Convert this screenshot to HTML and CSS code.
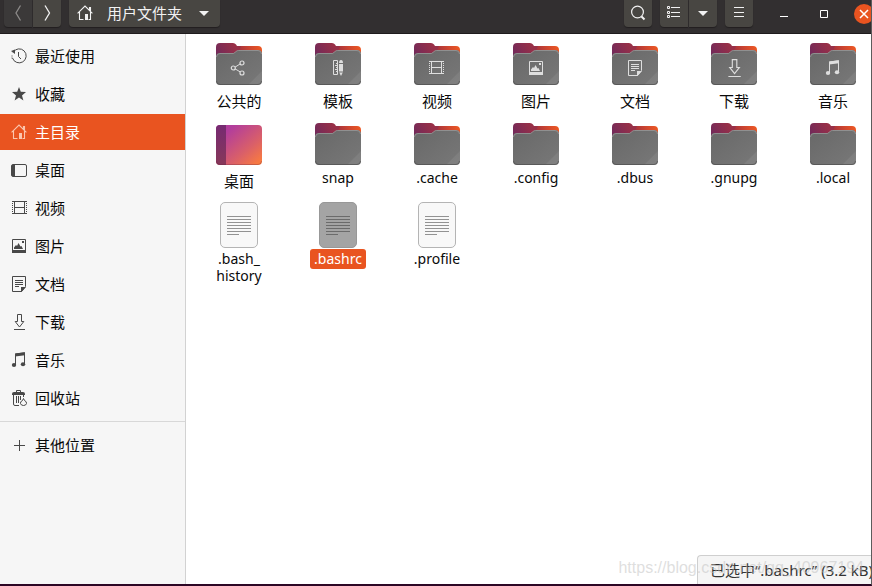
FILE: index.html
```html
<!DOCTYPE html>
<html lang="zh-CN">
<head>
<meta charset="utf-8">
<meta name="viewport" content="width=device-width, initial-scale=1">
<title>主目录</title>
<link rel="stylesheet" href="styles.css">
</head>
<body>
<svg class="sprite" aria-hidden="true">
  <defs>
    <linearGradient id="back" gradientUnits="userSpaceOnUse" x1="1" y1="22" x2="47" y2="6">
      <stop offset="0" stop-color="#772953"/><stop offset="0.5" stop-color="#a0303f"/><stop offset="0.75" stop-color="#cd4530"/><stop offset="1" stop-color="#f05a22"/>
    </linearGradient>
    <linearGradient id="tab" gradientUnits="userSpaceOnUse" x1="1" y1="14" x2="18" y2="4">
      <stop offset="0" stop-color="#70295a"/><stop offset="1" stop-color="#983048"/>
    </linearGradient>
    <linearGradient id="front" x1="0" y1="0" x2="1" y2="1">
      <stop offset="0" stop-color="#686868"/><stop offset="1" stop-color="#787878"/>
    </linearGradient>
    <linearGradient id="desk" x1="0" y1="0" x2="1" y2="1">
      <stop offset="0.2" stop-color="#b23d9c"/><stop offset="0.65" stop-color="#da6068"/><stop offset="1" stop-color="#ff8038"/>
    </linearGradient>
    <linearGradient id="dock" x1="0" y1="0" x2="0" y2="1">
      <stop offset="0" stop-color="#762a72"/><stop offset="1" stop-color="#873859"/>
    </linearGradient>
  </defs>
  <symbol id="folder" viewBox="0 0 48 48">
    <path fill="url(#back)" d="M1 10h22l1-4h19a4 4 0 0 1 4 4v12H1z"/>
    <path fill="url(#tab)" d="M1 24V7a4 4 0 0 1 4-4h13q2 0 3 1.500l1 1.500h4l-3 7z"/>
    <path fill="url(#front)" d="M1 17a4 4 0 0 1 4-4h13q1.500 0 2.500-1l1.500-1.200q.8-.8 2-.8h19a4 4 0 0 1 4 4v27a4 4 0 0 1-4 4H5a4 4 0 0 1-4-4z"/>
    <path fill="#fff" opacity=".07" d="M47 31v10a4 4 0 0 1-4 4H33z"/>
    <path fill="none" stroke="#999" opacity=".8" d="M1.500 17a3.500 3.500 0 0 1 3.500-3.500h13.500l3.500-2.700q.6-.3 1.500-.3H43a3.500 3.500 0 0 1 3.500 3.500"/>
    <path fill="none" stroke="#4e4e4e" opacity=".7" d="M1.500 41a3.500 3.500 0 0 0 3.500 3.500h38a3.500 3.500 0 0 0 3.500-3.500"/>
  </symbol>
  <symbol id="desktop-big" viewBox="0 0 48 48">
    <rect x="1" y="5" width="46" height="40" rx="4" fill="url(#desk)"/>
    <path d="M11 5v40H5a4 4 0 0 1-4-4V9a4 4 0 0 1 4-4z" fill="url(#dock)"/>
    <path d="M1.500 41a3.500 3.500 0 0 0 3.500 3.500h38a3.500 3.500 0 0 0 3.500-3.500" fill="none" stroke="#602040" opacity=".3"/>
  </symbol>
  <symbol id="text-file" viewBox="0 0 48 49">
    <rect class="paper" x="5.500" y="2.500" width="37" height="45" rx="4.500"/>
    <path class="ink" fill="none" d="M12 16.500h24M12 19.500h24M12 22.500h24M12 25.500h24M12 28.500h24M12 31.500h24M12 34.500h12"/>
  </symbol>
  <symbol id="home" viewBox="0 0 16 16">
    <path fill="none" stroke="currentColor" stroke-width="1.100" d="M.6 8.400 8 1.100l7.400 7.300M2.500 7v7.500h4M13.500 7v7.500h-2M12.500 5V2.500h1V6"/>
    <path fill="currentColor" d="M8 9h3v6H8z"/>
  </symbol>
  <symbol id="recent" viewBox="0 0 16 16">
    <path fill="none" stroke="currentColor" d="M2.200 4.200A7 7 0 1 1 1.500 10M7.500 4v4.500L10 11"/>
    <path fill="currentColor" d="M0 3l4-1.500V6z"/>
    <path fill="none" stroke="currentColor" stroke-dasharray="1 1" d="M1 7.500v3"/>
  </symbol>
  <symbol id="star" viewBox="0 0 16 16">
    <path fill="currentColor" d="m8 1 1.800 4.800 5.200.3-4 3.300 1.400 5L8 11.600l-4.400 2.800 1.400-5-4-3.300 5.200-.3z"/>
  </symbol>
  <symbol id="desktop" viewBox="0 0 16 16">
    <rect x=".5" y="2.500" width="15" height="12" rx="1.500" fill="none" stroke="currentColor"/>
    <path fill="currentColor" d="M1 3h3v11H1z"/>
  </symbol>
  <symbol id="video" viewBox="0 0 16 16">
    <path fill="none" stroke="currentColor" d="M1 1.500h15M1 13.500h15M3.500 1v13M13.500 1v13M3 7.500h11"/>
    <path fill="none" stroke="currentColor" stroke-dasharray="1 1" d="M1.500 1v13M15.500 1v13"/>
  </symbol>
  <symbol id="image" viewBox="0 0 16 16">
    <path fill="none" stroke="currentColor" d="M1.500 1.500h13v12h-13z"/>
    <path fill="currentColor" d="M1 12h14v3H1zM3 11V9.500L5 7l1 1 1.500-3 2 3.500L10.500 8l1.500 3zM11 3h2v2h-2z"/>
  </symbol>
  <symbol id="doc" viewBox="0 0 16 16">
    <path fill="none" stroke="currentColor" d="M1.500.5h13v10l-4 5h-9zM4 4.500h8M4 6.500h8M4 8.500h8M4 10.500h4"/>
    <path fill="currentColor" d="M10 11h5l-4.500 5H10z"/>
  </symbol>
  <symbol id="down" viewBox="0 0 16 16">
    <path fill="none" stroke="currentColor" d="M6.500.5h4v7h2.300L8.500 13 4.200 7.500h2.300zM3 15.500h11"/>
  </symbol>
  <symbol id="music" viewBox="0 0 16 16">
    <path fill="none" stroke="currentColor" d="M4.500 13V2L13.500.8v11.500"/>
    <path fill="currentColor" d="M4 1.500 14 .3v3L4 4.500z"/>
    <ellipse cx="3" cy="13" rx="2.200" ry="2" fill="currentColor"/><ellipse cx="12" cy="12.300" rx="2.200" ry="2" fill="currentColor"/>
  </symbol>
  <symbol id="trash" viewBox="0 0 16 16">
    <path fill="none" stroke="currentColor" d="M5.500 2V.5h4V2M2.500 4v10q0 1.500 1.500 1.500h4M12.500 4v3M5.500 6v7M7.500 6v7M9.500 6v4"/>
    <path fill="currentColor" d="M1 4q0-2 2-2h9q2 0 2 2v1H1z"/>
    <path fill="none" stroke="currentColor" d="m12.500 8.500-1 2q-2.500 1-2 3 .5 2 3 2t3-2q.3-2-2-3z"/>
  </symbol>
  <symbol id="plus" viewBox="0 0 16 16"><path fill="none" stroke="currentColor" d="M3 8.500h11M8.500 3v11"/></symbol>
  <symbol id="share" viewBox="0 0 16 16">
    <path fill="none" stroke="currentColor" d="M5 7.200 10 4M5 8.800l5 3"/>
    <g fill="none" stroke="currentColor" stroke-width="1.200"><circle cx="3.300" cy="8" r="2"/><circle cx="12" cy="3" r="2"/><circle cx="12" cy="13" r="2"/></g>
  </symbol>
  <symbol id="template" viewBox="0 0 16 16">
    <path fill="none" stroke="currentColor" d="M3.500.5h4v14h-4zM6 3.500h1M5 5.500h2M6 7.500h1M5 9.500h2M6 11.500h1"/>
    <path fill="currentColor" d="M9 3q0-3 2-3t2 3v9l-2 4-2-4z"/>
    <path stroke="#707070" d="M9 3.500h4M9 12h4"/>
  </symbol>
  <symbol id="prev" viewBox="0 0 16 16"><path fill="none" stroke="currentColor" stroke-width="1.300" d="M10.500.5 6 8l4.500 7.500"/></symbol>
  <symbol id="next" viewBox="0 0 16 16"><path fill="none" stroke="currentColor" stroke-width="1.300" d="M6 .5 10.500 8 6 15.500"/></symbol>
  <symbol id="caret" viewBox="0 0 16 16"><path fill="currentColor" d="M3 6h10l-5 5z"/></symbol>
  <symbol id="search" viewBox="0 0 16 16">
    <circle cx="7.500" cy="7" r="5.900" fill="none" stroke="currentColor" stroke-width="1.200"/><path stroke="currentColor" stroke-width="2" d="m11.500 11.500 3 3"/>
  </symbol>
  <symbol id="list" viewBox="0 0 16 16">
    <path fill="none" stroke="currentColor" d="M1.500 1.500h2v2h-2zM1.500 6.500h2v2h-2zM1.500 10.500h2v2h-2zM5 2.500h9M5 7.500h9M5 11.500h9"/>
  </symbol>
  <symbol id="menu" viewBox="0 0 16 16"><path stroke="currentColor" d="M3 2.500h10M3 7.500h10M3 11.500h10"/></symbol>
  <symbol id="min" viewBox="0 0 16 16"><path stroke="currentColor" d="M4 10.500h8"/></symbol>
  <symbol id="max" viewBox="0 0 16 16"><path fill="none" stroke="currentColor" d="M4.500 4.500h7v7h-7z"/></symbol>
  <symbol id="close" viewBox="0 0 16 16"><path stroke="currentColor" stroke-width="1.500" d="m4 4 8 8M12 4l-8 8"/></symbol>
</svg>

<div class="window">
  <header class="bar">
    <div class="group">
      <button class="btn dim" aria-label="后退"><svg class="icon"><use href="#prev"/></svg></button>
      <button class="btn" aria-label="前进"><svg class="icon"><use href="#next"/></svg></button>
    </div>
    <button class="btn path"><svg class="icon"><use href="#home"/></svg><span>用户文件夹</span><svg class="icon"><use href="#caret"/></svg></button>
    <div class="tools">
      <button class="btn" aria-label="搜索"><svg class="icon"><use href="#search"/></svg></button>
      <div class="group">
        <button class="btn" aria-label="列表视图"><svg class="icon"><use href="#list"/></svg></button>
        <button class="btn" aria-label="视图选项"><svg class="icon"><use href="#caret"/></svg></button>
      </div>
      <button class="btn" aria-label="菜单"><svg class="icon"><use href="#menu"/></svg></button>
    </div>
    <div class="controls">
      <button class="ctl" aria-label="最小化"><svg class="icon"><use href="#min"/></svg></button>
      <button class="ctl" aria-label="最大化"><svg class="icon"><use href="#max"/></svg></button>
      <button class="ctl close" aria-label="关闭"><svg class="icon"><use href="#close"/></svg></button>
    </div>
  </header>

  <div class="body">
    <nav class="places">
      <a class="place" href="#"><svg class="icon"><use href="#recent"/></svg>最近使用</a>
      <a class="place" href="#"><svg class="icon"><use href="#star"/></svg>收藏</a>
      <a class="place active" href="#"><svg class="icon"><use href="#home"/></svg>主目录</a>
      <a class="place" href="#"><svg class="icon"><use href="#desktop"/></svg>桌面</a>
      <a class="place" href="#"><svg class="icon"><use href="#video"/></svg>视频</a>
      <a class="place" href="#"><svg class="icon"><use href="#image"/></svg>图片</a>
      <a class="place" href="#"><svg class="icon"><use href="#doc"/></svg>文档</a>
      <a class="place" href="#"><svg class="icon"><use href="#down"/></svg>下载</a>
      <a class="place" href="#"><svg class="icon"><use href="#music"/></svg>音乐</a>
      <a class="place" href="#"><svg class="icon"><use href="#trash"/></svg>回收站</a>
      <hr class="rule">
      <a class="place" href="#"><svg class="icon"><use href="#plus"/></svg>其他位置</a>
    </nav>

    <main class="files">
      <a class="file" href="#"><svg class="thumb"><use href="#folder"/><use class="emblem" href="#share" x="15" y="20" width="16" height="16"/></svg><span class="name cjk">公共的</span></a>
      <a class="file" href="#"><svg class="thumb"><use href="#folder"/><use class="emblem" href="#template" x="16" y="20" width="16" height="16"/></svg><span class="name cjk">模板</span></a>
      <a class="file" href="#"><svg class="thumb"><use href="#folder"/><use class="emblem" href="#video" x="15" y="20" width="16" height="16"/></svg><span class="name cjk">视频</span></a>
      <a class="file" href="#"><svg class="thumb"><use href="#folder"/><use class="emblem" href="#image" x="16" y="20" width="16" height="16"/></svg><span class="name cjk">图片</span></a>
      <a class="file" href="#"><svg class="thumb"><use href="#folder"/><use class="emblem" href="#doc" x="16" y="20" width="16" height="16"/></svg><span class="name cjk">文档</span></a>
      <a class="file" href="#"><svg class="thumb"><use href="#folder"/><use class="emblem" href="#down" x="15" y="19" width="18" height="18"/></svg><span class="name cjk">下载</span></a>
      <a class="file" href="#"><svg class="thumb"><use href="#folder"/><use class="emblem" href="#music" x="16" y="20" width="16" height="16"/></svg><span class="name cjk">音乐</span></a>
      <a class="file" href="#"><svg class="thumb"><use href="#desktop-big"/></svg><span class="name cjk">桌面</span></a>
      <a class="file" href="#"><svg class="thumb"><use href="#folder"/></svg><span class="name">snap</span></a>
      <a class="file" href="#"><svg class="thumb"><use href="#folder"/></svg><span class="name">.cache</span></a>
      <a class="file" href="#"><svg class="thumb"><use href="#folder"/></svg><span class="name">.config</span></a>
      <a class="file" href="#"><svg class="thumb"><use href="#folder"/></svg><span class="name">.dbus</span></a>
      <a class="file" href="#"><svg class="thumb"><use href="#folder"/></svg><span class="name">.gnupg</span></a>
      <a class="file" href="#"><svg class="thumb"><use href="#folder"/></svg><span class="name">.local</span></a>
      <a class="file" href="#"><svg class="thumb page"><use href="#text-file"/></svg><span class="name">.bash_<wbr>history</span></a>
      <a class="file selected" href="#"><svg class="thumb page"><use href="#text-file"/></svg><span class="name">.bashrc</span></a>
      <a class="file" href="#"><svg class="thumb page"><use href="#text-file"/></svg><span class="name">.profile</span></a>
    </main>
  </div>
  <div class="status" role="status">已选中“.bashrc” (3.2 kB)</div>
  <div class="mark">https://blog.csdn.net/qq_40967194</div>
</div>
</body>
</html>
```
FILE: styles.css
```css
* { box-sizing: border-box; }

body {
  margin: 0;
  background: #2c0624;
  color: #0a0a0a;
  font: 15px/20px "Noto Sans", "Noto Sans CJK SC", sans-serif;
}

.sprite { position: absolute; width: 0; height: 0; }
.icon { width: 16px; height: 16px; flex: none; display: block; }
a { color: inherit; text-decoration: none; }

.window {
  position: relative;
  display: flex;
  flex-direction: column;
  height: 100vh;
  border-right: 1px solid #5c5c5c;
  border-bottom: 2px solid #2c0624;
  overflow: hidden;
}

.bar {
  flex: none;
  display: flex;
  gap: 8px;
  padding: 0 0 6px 4px;
  background: #322f30;
  border-bottom: 1px solid #1f1b1d;
  color: #f2f2f2;
}

.group { display: flex; gap: 1px; }

.btn {
  display: flex;
  align-items: center;
  justify-content: center;
  min-width: 28px;
  height: 27px;
  padding: 0 6px 1px;
  border: 0;
  border-radius: 0 0 4px 4px;
  background: #484642;
  box-shadow: 0 1px 1px #221f20;
  color: inherit;
  font: inherit;
}

.group .btn:first-child { border-bottom-right-radius: 0; }
.group .btn:last-child { border-bottom-left-radius: 0; }
.btn.dim { background: #3b3939; color: #8d8b8a; }
.btn.path { padding: 0 8px 1px; }
.path span { padding: 0 14px; }

.tools { display: flex; gap: 8px; margin-left: auto; }

.controls {
  display: flex;
  align-items: center;
  gap: 20px;
  margin: 0 -3px 0 13px;
}

.ctl {
  display: flex;
  align-items: center;
  justify-content: center;
  width: 20px;
  height: 20px;
  padding: 0;
  border: 0;
  border-radius: 50%;
  background: none;
  color: #fff;
}

.ctl.close { background: #e95420; }

.body { flex: 1; display: flex; min-height: 0; background: #fff; }

.places {
  flex: 0 0 186px;
  display: flex;
  flex-direction: column;
  gap: 2px;
  padding-top: 4px;
  background: #f6f6f6;
  border-right: 1px solid #d2d2d2;
}

.place {
  display: flex;
  align-items: center;
  gap: 8px;
  height: 36px;
  padding-left: 11px;
}

.place .icon { color: #484848; }
.place.active { background: #e95420; color: #fff; }
.place.active .icon { color: #fbc6ae; }

.rule {
  width: 100%;
  height: 1px;
  margin: 3px 0;
  border: 0;
  background: #d8d8d8;
}

.files {
  flex: 1;
  display: grid;
  grid-template-columns: repeat(7, 92px);
  align-content: start;
  gap: 5px 7px;
  padding: 6px 0 0 7px;
  overflow: hidden;
}

.file {
  --paper: #f8f8f8;
  --edge: #b4b4b4;
  --ink: #929292;
  display: flex;
  flex-direction: column;
  align-items: center;
}

.file.selected {
  --paper: #a4a4a4;
  --edge: #989898;
  --ink: #6b6b6b;
}

.thumb { width: 48px; height: 48px; display: block; }
.thumb.page { height: 49px; }
.emblem { color: #dedede; }
.paper { fill: var(--paper); stroke: var(--edge); }
.ink { stroke: var(--ink); }

.name {
  max-width: 64px;
  padding: 1px 4px 2px;
  border-radius: 3px;
  font-size: 14px;
  line-height: 17px;
  text-align: center;
}

.name.cjk { font-size: 15px; line-height: 24px; }
.selected .name { background: #e95420; color: #fff; }

.status {
  position: absolute;
  right: -4px;
  bottom: 0;
  padding: 4px 2px 4px 12px;
  border: 1px solid #cfcfcf;
  border-width: 1px 0 0 1px;
  border-radius: 4px 0 0 0;
  background: #f5f5f5;
  color: #333;
  font-size: 15px;
}

.mark {
  position: absolute;
  right: 7px;
  bottom: 6px;
  color: rgba(190, 190, 190, 0.5);
  font: 16px/20px "Liberation Sans", sans-serif;
  pointer-events: none;
}
```
